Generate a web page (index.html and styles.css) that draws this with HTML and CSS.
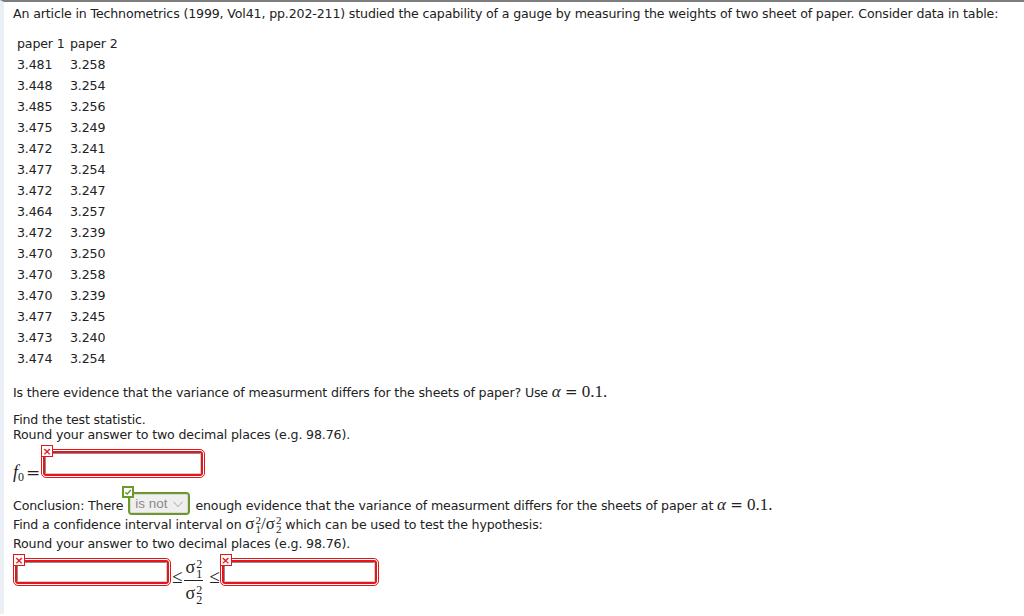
FILE: index.html
```html
<!DOCTYPE html>
<html>
<head>
<meta charset="utf-8">
<link rel="stylesheet" href="styles.css">
</head>
<body>
<div class="page">
  <p class="intro">An article in Technometrics (1999, Vol41, pp.202-211) studied the capability of a gauge by measuring the weights of two sheet of paper. Consider data in table:</p>
  <table class="data">
    <tr class="hd"><td class="c1">paper 1</td><td>paper 2</td></tr>
    <tr><td class="c1">3.481</td><td>3.258</td></tr>
    <tr><td class="c1">3.448</td><td>3.254</td></tr>
    <tr><td class="c1">3.485</td><td>3.256</td></tr>
    <tr><td class="c1">3.475</td><td>3.249</td></tr>
    <tr><td class="c1">3.472</td><td>3.241</td></tr>
    <tr><td class="c1">3.477</td><td>3.254</td></tr>
    <tr><td class="c1">3.472</td><td>3.247</td></tr>
    <tr><td class="c1">3.464</td><td>3.257</td></tr>
    <tr><td class="c1">3.472</td><td>3.239</td></tr>
    <tr><td class="c1">3.470</td><td>3.250</td></tr>
    <tr><td class="c1">3.470</td><td>3.258</td></tr>
    <tr><td class="c1">3.470</td><td>3.239</td></tr>
    <tr><td class="c1">3.477</td><td>3.245</td></tr>
    <tr><td class="c1">3.473</td><td>3.240</td></tr>
    <tr><td class="c1">3.474</td><td>3.254</td></tr>
  </table>
  <p class="question">Is there evidence that the variance of measurment differs for the sheets of paper? Use <span class="math"><i>α</i> <span class="eq">=</span> 0.1.</span></p>
  <p class="instr">Find the test statistic.<br>Round your answer to two decimal places (e.g. 98.76).</p>
  <div class="row-f">
    <span class="math f0"><i>f</i><span class="f0sub">0</span><span class="eq">=</span></span>
    <span class="ans wide1"><span class="badge bad">×</span><span class="ans-inner"><span class="field"></span></span></span>
  </div>
  <p class="conclusion">Conclusion: There <span class="sel-wrap"><span class="badge good"><svg viewBox="0 0 10 10" width="8" height="8"><path d="M1.5 5.2 L4 7.5 L8.5 2.5" fill="none" stroke="#5e9a1c" stroke-width="1.6"/></svg></span><span class="sel">is not <svg class="chev" viewBox="0 0 12 8" width="12" height="7"><path d="M1 1 L6 6.5 L11 1" fill="none" stroke="#9a9a9a" stroke-width="1"/></svg></span></span> enough evidence that the variance of measurment differs for the sheets of paper at <span class="math"><i>α</i> <span class="eq">=</span> 0.1.</span></p>
  <p class="instr2">Find a confidence interval interval on <span class="math sig">σ<span class="scripts"><span class="sp">2</span><span class="sb">1</span></span>/σ<span class="scripts"><span class="sp">2</span><span class="sb">2</span></span></span> which can be used to test the hypothesis:<br>Round your answer to two decimal places (e.g. 98.76).</p>
  <div class="row-ci">
    <span class="ans wide2"><span class="badge bad">×</span><span class="ans-inner"><span class="field"></span></span></span>
    <span class="math le">≤</span>
    <span class="math frac"><span class="num">σ<span class="scripts big"><span class="sp">2</span><span class="sb">1</span></span></span><span class="den">σ<span class="scripts big"><span class="sp">2</span><span class="sb">2</span></span></span></span>
    <span class="math le le2">≤</span>
    <span class="ans wide3"><span class="badge bad">×</span><span class="ans-inner"><span class="field"></span></span></span>
  </div>
</div>
</body>
</html>
```
FILE: styles.css
```css
html, body { margin: 0; padding: 0; background: #fff; }
body {
  font-family: "DejaVu Sans", Verdana, sans-serif;
  font-size: 12.6px;
  letter-spacing: -0.15px;
  color: #222;
  border-top: 2px solid #7d7d7d;
  border-left: 4px solid #eaeef5;
  min-height: 614px;
  box-sizing: border-box;
}
.page { padding: 4px 0 0 9px; }
p { margin: 0; line-height: 15px; }
.intro { white-space: nowrap; }
.data { border-collapse: collapse; margin: 13px 0 0 4px; }
.data td { padding: 0; height: 21px; line-height: 21px; }
.data tr.hd td { height: 20px; line-height: 20px; }
.data td.c1 { width: 53px; }
.question { margin-top: 15px; }
.math { font-family: "Liberation Serif", "DejaVu Serif", serif; font-size: 17px; letter-spacing: 0; }
.math i { font-style: italic; }
.eq { font-family: "DejaVu Serif", serif; font-size: 15px; }
.instr { margin-top: 12px; }
.row-f { display: flex; align-items: flex-end; margin-top: 6px; height: 30px; }
.f0 { font-size: 18px; line-height: 20px; margin-bottom: -6px; width: 28px; white-space: nowrap; }
.f0sub { font-size: 12px; position: relative; top: 3px; margin-right: 2px; }
.f0 .eq { font-size: 17px; }
.ans { position: relative; display: inline-block; border: 1px solid #e3161b; border-radius: 5px; padding: 1px; }
.ans-inner { display: block; border: 2px solid #e3161b; border-radius: 3px; }
.field { display: block; border: 1px solid #8e8e8e; border-right-color: #cfcfcf; border-bottom-color: #cfcfcf; background: #fff; box-sizing: border-box; }
.wide1 .field { width: 156px; height: 21px; }
.wide2 .field { width: 150px; height: 20px; }
.wide3 .field { width: 151px; height: 20px; }
.badge { position: absolute; left: -1px; top: -5px; width: 12px; height: 12px; box-sizing: border-box; background: #fff; display: flex; align-items: center; justify-content: center; font-family: "DejaVu Sans", sans-serif; font-weight: bold; line-height: 1; letter-spacing: 0; }
.badge.bad { border: 1px solid #e3161b; color: #e3161b; font-size: 11px; }
.badge.good { border: 2px solid #6a9a2c; left: -8px; top: -8px; }
.conclusion { margin-top: 14px; line-height: 18px; }
.sel-wrap { position: relative; display: inline-block; vertical-align: 2px; border: 2px solid #6a9a2c; border-radius: 4px; background: #f2f2f2; margin: 0 2px 0 1px; }
.sel { display: flex; align-items: center; gap: 4px; height: 17px; padding: 0 3px 0 4px; font-family: "Liberation Sans", Arial, sans-serif; font-size: 13.5px; letter-spacing: 0; color: #8a8a8a; border: 1px solid #d9d9d9; border-radius: 2px; background: #efefef; }
.chev { margin-top: 1px; }
.instr2 { margin-top: -1px; line-height: 19px; }
.sig { font-size: 17px; }
.scripts { display: inline-block; vertical-align: -4px; font-size: 11px; line-height: 9px; margin-left: 1px; text-align: left; }
.scripts.big { line-height: 10px; vertical-align: -5px; font-size: 12px; }
.scripts .sp, .scripts .sb { display: block; }
.row-ci { display: flex; align-items: flex-start; margin-top: 5px; }
.le { font-size: 19px; line-height: 20px; margin-top: 9px; margin-left: 1px; }
.le2 { margin-left: 6px; margin-right: 0; }
.frac { display: inline-flex; flex-direction: column; align-items: center; margin: -3px 0 0 2px; font-size: 18px; }
.frac .num { border-bottom: 1px solid #222; padding: 0 1px 0; line-height: 25px; height: 25px; }
.frac .den { line-height: 24px; height: 24px; }
```
